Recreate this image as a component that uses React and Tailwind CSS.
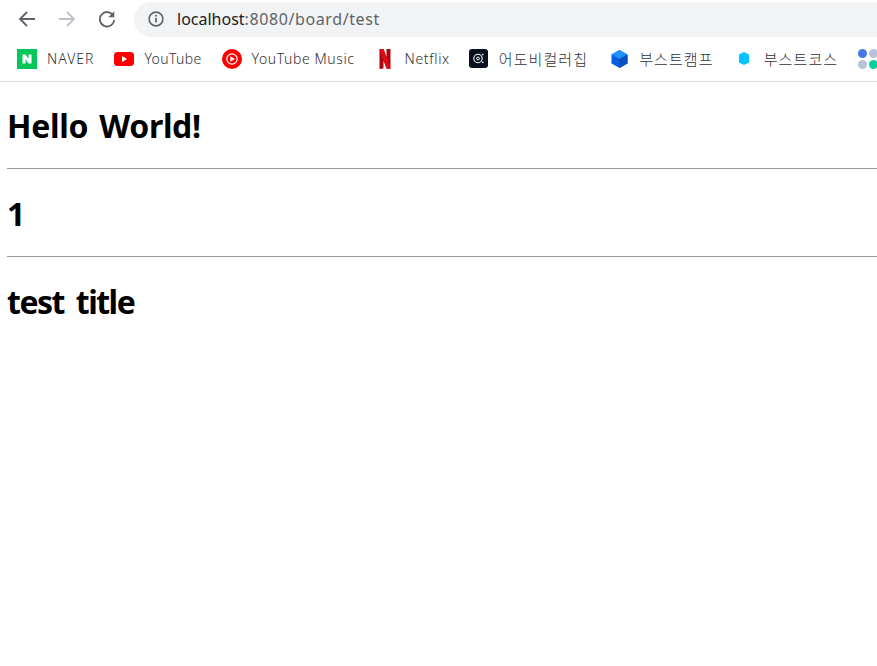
import React from "react";

const Bookmark = ({ icon, label, className = "", textClass = "text-[14px]" }) => (
  <div className={"flex items-center shrink-0 " + className}>
    <span className="w-5 h-5 flex items-center justify-center shrink-0">{icon}</span>
    <span className={"ml-[10px] leading-5 text-[#303134] whitespace-nowrap " + textClass}>{label}</span>
  </div>
);

export default function App() {
  return (
    <div className="w-[877px] h-[666px] overflow-hidden bg-white" style={{ fontFamily: '"Noto Sans","Noto Sans CJK KR",sans-serif' }}>
      <div className="h-[82px] border-b border-[#dadce0] overflow-hidden">
        <div className="h-[37px] flex items-center pt-px">
          <div className="flex items-center pl-[17px] gap-[20px] shrink-0">
            <svg width="20" height="20" viewBox="0 0 20 20" fill="none" stroke="#5f6368" strokeWidth="1.8"><path d="M18 10H3M10 3l-7 7 7 7" /></svg>
            <svg width="20" height="20" viewBox="0 0 20 20" fill="none" stroke="#bdc1c6" strokeWidth="1.8"><path d="M2 10h15M10 3l7 7-7 7" /></svg>
            <svg width="20" height="20" viewBox="0 0 20 20" fill="none" stroke="#5f6368" strokeWidth="1.8"><path d="M16.2 6.5A7.2 7.2 0 1 0 17.2 11" /><path d="M17.3 2.3v6h-6z" fill="#5f6368" stroke="none" /></svg>
          </div>
          <div className="ml-[17px] w-[800px] h-[35px] rounded-l-full bg-[#f1f3f4] flex items-center pl-[14px] shrink-0">
            <svg width="16" height="16" viewBox="0 0 16 16" fill="none"><circle cx="8" cy="8" r="6.9" stroke="#5f6368" strokeWidth="1.6" /><path d="M8 7v4.6" stroke="#5f6368" strokeWidth="1.7" /><circle cx="8" cy="4.8" r="1" fill="#5f6368" /></svg>
            <span className="ml-[13px] text-[16px] leading-5 whitespace-nowrap">
              <span className="text-[#202124]">localhost</span><span className="text-[#5f6368] tracking-[0.6px]">:8080/board/test</span>
            </span>
          </div>
        </div>
        <div className="h-[44px] flex items-center pl-[17px] pb-[1px]">
          <Bookmark
            label="NAVER"
            textClass="text-[14px] tracking-[1px] font-light"
            icon={<span className="w-5 h-5 bg-[#03c75a] flex items-center justify-center"><svg width="10" height="10" viewBox="0 0 10 10"><path d="M0.5 0.5h3l3 4.3V0.5h3v9h-3l-3-4.3v4.3h-3z" fill="#fff" /></svg></span>}
          />
          <Bookmark
            className="ml-[20px]"
            label="YouTube"
            textClass="text-[14px] tracking-[0.35px] font-light"
            icon={<svg width="20" height="14" viewBox="0 0 20 14"><rect width="20" height="14" rx="3.5" fill="#ff0000" /><path d="M8 4l5 3-5 3z" fill="#fff" /></svg>}
          />
          <Bookmark
            className="ml-[20px]"
            label="YouTube Music"
            textClass="text-[14px] tracking-[0.6px] font-light"
            icon={<svg width="20" height="20" viewBox="0 0 20 20"><circle cx="10" cy="10" r="10" fill="#ff0000" /><circle cx="10" cy="10" r="5.2" fill="none" stroke="#fff" strokeWidth="1.2" /><path d="M8.3 7.2l4.6 2.8-4.6 2.8z" fill="#fff" /></svg>}
          />
          <Bookmark
            className="ml-[20px]"
            label="Netflix"
            textClass="text-[14px] tracking-[0.65px] font-light"
            icon={<svg width="14" height="20" viewBox="0 0 14 20"><path d="M1.5 0h4l3 8V0h4v20l-4-.6-3-8v8.2l-4 .4z" fill="#a8060c" /><path d="M1.5 0h4l7 20-4-.6z" fill="#e50914" /></svg>}
          />
          <Bookmark
            className="ml-[19px]"
            label="어도비컬러칩"
            textClass="text-[15px] tracking-[1.1px] font-light"
            icon={<span className="w-[19px] h-[19px] rounded-[3px] bg-[#0b1020] flex items-center justify-center"><svg width="13" height="13" viewBox="0 0 13 13" fill="none" stroke="#fff"><circle cx="6" cy="6.5" r="4.2" strokeWidth="1.1" /><circle cx="6" cy="6.5" r="1.4" strokeWidth="1" /><circle cx="10.8" cy="2.6" r=".8" fill="#fff" stroke="none" /><circle cx="10.8" cy="10.4" r=".8" fill="#fff" stroke="none" /></svg></span>}
          />
          <Bookmark
            className="ml-[21px]"
            label="부스트캠프"
            textClass="text-[15px] tracking-[1.1px] font-light"
            icon={<svg width="17" height="18" viewBox="0 0 17 18"><path d="M8.5 0l8 4.5v9L8.5 18l-8-4.5v-9z" fill="#0a5fe0" /><path d="M8.5 0l8 4.5-8 4.5-8-4.5z" fill="#1e90ff" /><path d="M8.5 9l8-4.5v9L8.5 18z" fill="#0b4ec4" /></svg>}
          />
          <Bookmark
            className="ml-[20px]"
            label="부스트코스"
            textClass="text-[15px] tracking-[1.1px] font-light"
            icon={<svg width="10" height="13" viewBox="0 0 10 13"><path d="M5 0l5 2.5v8L5 13l-5-2.5v-8z" fill="#00c3ff" /></svg>}
          />
          <div className="ml-[20px] grid grid-cols-[9px_9px] gap-[2px] shrink-0">
            <span className="w-[9px] h-[9px] rounded-full bg-[#4a76e8]" />
            <span className="w-[9px] h-[9px] rounded-full bg-[#b6c3d8]" />
            <span className="w-[9px] h-[9px] rounded-full bg-[#b6c3d8]" />
            <span className="w-[9px] h-[9px] rounded-full bg-[#06cf9c]" />
          </div>
        </div>
      </div>
      <div className="pl-[7px]">
        <h1 className="text-[32px] leading-[44px] font-bold text-black mt-[22px] [word-spacing:3px] tracking-[-0.3px]">Hello World!</h1>
        <hr className="mt-[20px] border-t border-[#9a9a9a]" />
        <h2 className="text-[32px] leading-[44px] font-bold text-black mt-[23px]">1</h2>
        <hr className="mt-[20px] border-t border-[#9a9a9a]" />
        <h2 className="text-[32px] leading-[44px] font-bold text-black mt-[23px] tracking-[-1.5px] [word-spacing:5px]">test title</h2>
      </div>
    </div>
  );
}
